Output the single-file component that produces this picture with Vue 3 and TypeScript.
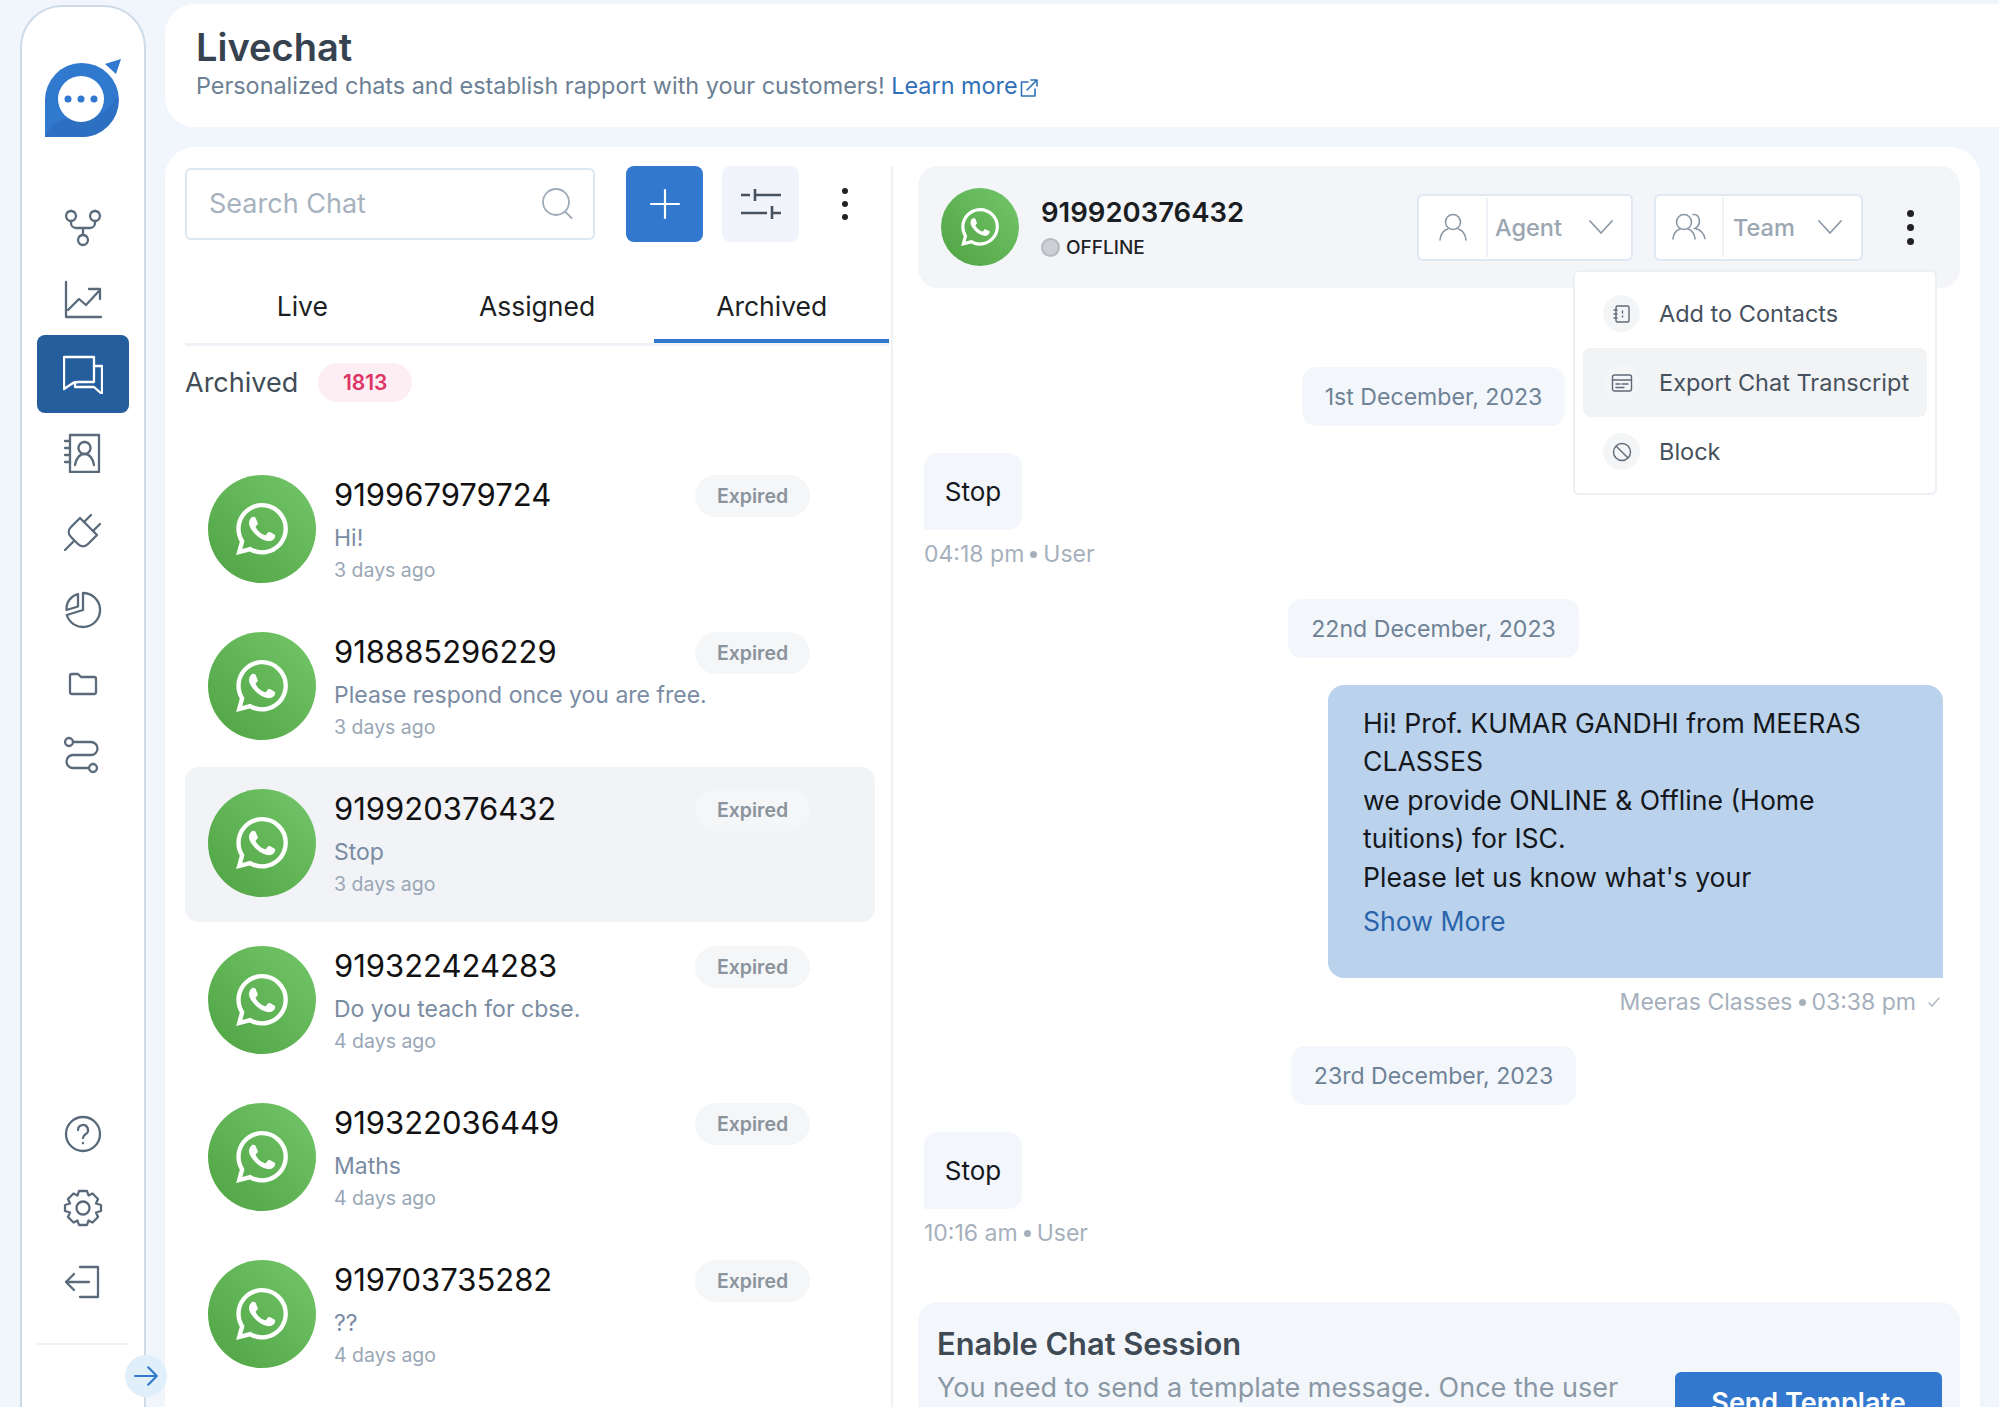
<script setup lang="ts">
const wa = "M17.472 14.382c-.297-.149-1.758-.867-2.03-.967-.273-.099-.471-.148-.67.15-.197.297-.767.966-.94 1.164-.173.199-.347.223-.644.075-.297-.15-1.255-.463-2.39-1.475-.883-.788-1.48-1.761-1.653-2.059-.173-.297-.018-.458.13-.606.134-.133.298-.347.446-.52.149-.174.198-.298.298-.497.099-.198.05-.371-.025-.52-.075-.149-.669-1.612-.916-2.207-.242-.579-.487-.5-.669-.51-.173-.008-.371-.01-.57-.01-.198 0-.52.074-.792.372-.272.297-1.04 1.016-1.04 2.479 0 1.462 1.065 2.875 1.213 3.074.149.198 2.096 3.2 5.077 4.487.709.306 1.262.489 1.694.625.712.227 1.36.195 1.871.118.571-.085 1.758-.719 2.006-1.413.248-.694.248-1.289.173-1.413-.074-.124-.272-.198-.57-.347m-5.421 7.403h-.004a9.87 9.87 0 01-5.031-1.378l-.361-.214-3.741.982.998-3.648-.235-.374a9.86 9.86 0 01-1.51-5.26c.001-5.45 4.436-9.884 9.888-9.884 2.64 0 5.122 1.03 6.988 2.898a9.825 9.825 0 012.893 6.994c-.003 5.45-4.437 9.884-9.885 9.884m8.413-18.297A11.815 11.815 0 0012.05 0C5.495 0 .16 5.335.157 11.892c0 2.096.547 4.142 1.588 5.945L.057 24l6.305-1.654a11.882 11.882 0 005.683 1.448h.005c6.554 0 11.89-5.335 11.893-11.893a11.821 11.821 0 00-3.48-8.413z";

const chats = [
  { phone: "919967979724", text: "Hi!", time: "3 days ago", active: false },
  { phone: "918885296229", text: "Please respond once you are free.", time: "3 days ago", active: false },
  { phone: "919920376432", text: "Stop", time: "3 days ago", active: true },
  { phone: "919322424283", text: "Do you teach for cbse.", time: "4 days ago", active: false },
  { phone: "919322036449", text: "Maths", time: "4 days ago", active: false },
  { phone: "919703735282", text: "??", time: "4 days ago", active: false },
];

const nav = [
  { h: 72, active: false, paths: ["M8 3a5 5 0 1 0 .01 0M32 3a5 5 0 1 0 .01 0M20 27a5 5 0 1 0 .01 0", "M8 13v2a5 5 0 0 0 5 5h14a5 5 0 0 0 5-5v-2M20 20v7"] },
  { h: 71, active: false, paths: ["M3 2v35h35", "M5 30l11-11 7 6 13-14", "M26 9h11v10"] },
  { h: 78, active: true, paths: ["M1 3h30v25H15l-5 1-9 6z", "M31 12h8v28l-8-7H12v-5"] },
  { h: 79, active: false, paths: ["M7 2h29v37H7z", "M2 8h5M2 15h5M2 22h5M2 29h5", "M21.500 9a6 6 0 1 0 .01 0", "M12 32c1-7 5-11 9.500-11s8.500 4 9.500 11"] },
  { h: 80, active: false, paths: ["M17 6L34 23L25 32C22 35 18 35 15 32L8 25C5 22 5 18 8 15Z", "M21 10l7-7M30 19l7-7", "M11 29l-9 9"] },
  { h: 76, active: false, paths: ["M20 3a17 17 0 1 1-16.200 22L20 20z", "M15 4v12.500L3.500 20C3 12 8 6 15 4z"] },
  { h: 72, active: false, paths: ["M7 12a2 2 0 0 1 2-2h6l3 3h13a2 2 0 0 1 2 2v13a2 2 0 0 1-2 2H9a2 2 0 0 1-2-2z"] },
  { h: 70, active: false, paths: ["M6 3a4 4 0 1 0 .01 0", "M10 7h18a6 6 0 0 1 0 13H10a6 6 0 0 0 0 13h16", "M30 29a4 4 0 1 0 .01 0"] },
];
</script>

<template>
  <div class="page">
    <aside class="sidebar">
      <svg class="logo" viewBox="0 0 78 80" width="78" height="80">
        <path d="M1 78V42a37 37 0 1 1 37 36z" fill="#3179ce" />
        <path d="M1 78c8-20 28-20 38-19 14 1 26-7 35-22 1 24-15 41-36 41z" fill="#2d70c2" />
        <path d="M61 5L77 0L72 15Z" fill="#3179ce" />
        <circle cx="37" cy="40" r="23" fill="#fff" />
        <circle cx="24" cy="40" r="3.500" fill="#3179ce" />
        <circle cx="37" cy="40" r="3.500" fill="#3179ce" />
        <circle cx="50" cy="40" r="3.500" fill="#3179ce" />
      </svg>
      <nav class="nav">
        <div v-for="(n, i) in nav" :key="i" class="nav-item" :class="{ active: n.active }" :style="{ height: n.h + 'px' }">
          <svg viewBox="0 0 40 40" width="40" height="40" fill="none" stroke="currentColor" stroke-width="2.300" stroke-linecap="round" stroke-linejoin="round">
            <path v-for="(p, j) in n.paths" :key="j" :d="p" />
          </svg>
        </div>
      </nav>
      <div class="nav-bottom">
        <div class="nav-item low">
          <svg viewBox="0 0 40 40" width="40" height="40" fill="none" stroke="currentColor" stroke-width="2.300" stroke-linecap="round" stroke-linejoin="round">
            <circle cx="20" cy="20" r="17" /><path d="M15 16a5 5 0 1 1 7.500 4.300c-1.600 1-2.500 2-2.500 3.700" /><path d="M20 29v.3" />
          </svg>
        </div>
        <div class="nav-item low">
          <svg viewBox="0 0 40 40" width="40" height="40" fill="none" stroke="currentColor" stroke-width="2.300" stroke-linecap="round" stroke-linejoin="round">
            <circle cx="20" cy="20" r="6.500" />
            <path d="M16 3h8l1.500 4.500 4-2 5.500 5.500-2 4.500 5 1.500v6l-5 1.500 2 4.500-5.500 5.500-4-2L24 37h-8l-1.500-4.500-4 2L5 29l2-4.500L2 23v-6l5-1.500L5 11l5.500-5.500 4 2z" />
          </svg>
        </div>
        <div class="nav-item low">
          <svg viewBox="0 0 40 40" width="40" height="40" fill="none" stroke="currentColor" stroke-width="2.300" stroke-linecap="round" stroke-linejoin="round">
            <path d="M17 5h18v30H17" /><path d="M26 20H3M11 12l-8 8 8 8" />
          </svg>
        </div>
      </div>
      <div class="side-rule"></div>
      <div class="expand">
        <svg viewBox="0 0 24 24" width="26" height="26" fill="none" stroke="#3179ce" stroke-width="2" stroke-linecap="round" stroke-linejoin="round"><path d="M2 12h20M14 4l8 8-8 8" /></svg>
      </div>
    </aside>

    <div class="content">
      <header class="topbar">
        <h1>Livechat</h1>
        <p>Personalized chats and establish rapport with your customers! <a>Learn more<svg viewBox="0 0 20 20" width="20" height="20" fill="none" stroke="currentColor" stroke-width="1.600" stroke-linecap="round" stroke-linejoin="round"><path d="M9 4H2.500v14h13.500v-7M8 12L18 2M12 2h6v6" /></svg></a></p>
      </header>

      <main class="card">
        <section class="left">
          <div class="tools">
            <div class="search">
              <span>Search Chat</span>
              <svg viewBox="0 0 34 34" width="34" height="34" fill="none" stroke="#9fabb8" stroke-width="1.800" stroke-linecap="round"><circle cx="15" cy="15" r="13" /><path d="M24.500 25l6 6" /></svg>
            </div>
            <button class="plus">
              <svg viewBox="0 0 32 32" width="32" height="32" fill="none" stroke="#fff" stroke-width="2.200" stroke-linecap="round"><path d="M16 2v28M2 16h28" /></svg>
            </button>
            <button class="filter">
              <svg viewBox="0 0 42 34" width="42" height="34" fill="none" stroke="#46525f" stroke-width="2.600"><path d="M1 8h9M15 8h26M15 2v12M1 26h26M32 26h9M32 19v13" /></svg>
            </button>
            <div class="kebab"><i></i><i></i><i></i></div>
          </div>
          <div class="tabs">
            <div class="tab">Live</div>
            <div class="tab">Assigned</div>
            <div class="tab on">Archived</div>
          </div>
          <div class="arch-row">
            <span>Archived</span>
            <b>1813</b>
          </div>
          <div class="list">
            <div v-for="c in chats" :key="c.phone" class="item" :class="{ selected: c.active }">
              <div class="avatar">
                <svg viewBox="0 0 24 24" width="52" height="52"><path :d="wa" fill="#fff" /></svg>
              </div>
              <div class="item-text">
                <div class="phone">{{ c.phone }}</div>
                <div class="preview">{{ c.text }}</div>
                <div class="ago">{{ c.time }}</div>
              </div>
              <span class="expired">Expired</span>
            </div>
          </div>
        </section>

        <section class="right">
          <div class="chat-head">
            <div class="avatar small">
              <svg viewBox="0 0 24 24" width="38" height="38"><path :d="wa" fill="#fff" /></svg>
            </div>
            <div class="who">
              <div class="who-phone">919920376432</div>
              <div class="who-state"><i></i>OFFLINE</div>
            </div>
            <div class="picker agent">
              <span class="pick-icon">
                <svg viewBox="0 0 30 30" width="30" height="30" fill="none" stroke="#8a97a6" stroke-width="1.600" stroke-linecap="round"><circle cx="15" cy="10" r="7.500" /><path d="M2 28c.5-7 5-10.500 8-11M28 28c-.5-7-5-10.500-8-11" /></svg>
              </span>
              <span class="pick-label">Agent</span>
              <svg viewBox="0 0 24 14" width="24" height="14" fill="none" stroke="#8a97a6" stroke-width="1.700" stroke-linecap="round" stroke-linejoin="round"><path d="M1 1l11 12L23 1" /></svg>
            </div>
            <div class="picker team">
              <span class="pick-icon">
                <svg viewBox="0 0 34 30" width="34" height="30" fill="none" stroke="#8a97a6" stroke-width="1.600" stroke-linecap="round"><circle cx="12" cy="10" r="7.500" /><path d="M1 27c.5-6 4-9 7-10M23 27c-.5-6-4-9-7-10M21 2.500c7-1 9 10 2 14 5 1 9 5 10 10" /></svg>
              </span>
              <span class="pick-label">Team</span>
              <svg viewBox="0 0 24 14" width="24" height="14" fill="none" stroke="#8a97a6" stroke-width="1.700" stroke-linecap="round" stroke-linejoin="round"><path d="M1 1l11 12L23 1" /></svg>
            </div>
            <div class="kebab head-kebab"><i></i><i></i><i></i></div>
          </div>

          <div class="menu">
            <div class="menu-item">
              <span class="menu-icon"><svg viewBox="0 0 20 20" width="20" height="20" fill="none" stroke="#5f6b78" stroke-width="1.400" stroke-linecap="round"><rect x="4" y="2" width="13" height="16" rx="1.500" /><path d="M2 6h3M2 10h3M2 14h3M10.500 7v2M10.500 12v1" /></svg></span>
              Add to Contacts
            </div>
            <div class="menu-item hover">
              <span class="menu-icon"><svg viewBox="0 0 22 20" width="22" height="20" fill="none" stroke="#5f6b78" stroke-width="1.400" stroke-linecap="round"><rect x="1.500" y="2" width="19" height="16" rx="2" /><path d="M1.500 7h19M5 11h4M11 11h6M5 14.500h8" /></svg></span>
              Export Chat Transcript
            </div>
            <div class="menu-item">
              <span class="menu-icon"><svg viewBox="0 0 20 20" width="20" height="20" fill="none" stroke="#5f6b78" stroke-width="1.400"><circle cx="10" cy="10" r="8.500" /><path d="M4 4l12 12" /></svg></span>
              Block
            </div>
          </div>

          <div class="thread">
            <div class="date d1">1st December, 2023</div>
            <div class="bubble">Stop</div>
            <div class="meta">04:18 pm<i></i>User</div>
            <div class="date d2">22nd December, 2023</div>
            <div class="outgoing">
              Hi! Prof. KUMAR GANDHI from MEERAS<br />CLASSES<br />we provide ONLINE &amp; Offline (Home<br />tuitions) for ISC.<br />Please let us know what's your
              <a>Show More</a>
            </div>
            <div class="meta end">Meeras Classes<i></i>03:38 pm
              <svg viewBox="0 0 14 12" width="14" height="12" fill="none" stroke="#a9b4bf" stroke-width="1.300" stroke-linecap="round" stroke-linejoin="round"><path d="M2 7l3 3 7-8" /></svg>
            </div>
            <div class="date d3">23rd December, 2023</div>
            <div class="bubble">Stop</div>
            <div class="meta">10:16 am<i></i>User</div>
          </div>

          <div class="enable">
            <div class="enable-text">
              <h2>Enable Chat Session</h2>
              <p>You need to send a template message. Once the user</p>
            </div>
            <button class="send">Send Template</button>
          </div>
        </section>
      </main>
    </div>
  </div>
</template>

<style>
html, body { margin: 0; background: #f1f6fd; }
</style>

<style scoped>
.page {
  display: flex;
  height: 1407px;
  overflow: hidden;
  background: #f1f6fd;
  font-family: Inter, "Liberation Sans", sans-serif;
  color: #111;
}
.sidebar {
  position: relative;
  flex: none;
  box-sizing: border-box;
  width: 126px;
  height: 1402px;
  margin: 5px 0 0 20px;
  border: 2px solid #cddbe8;
  border-bottom: none;
  border-radius: 42px 42px 0 0;
  background: #fff;
  display: flex;
  flex-direction: column;
  align-items: center;
}
.logo { margin-top: 52px; flex: none; }
.nav { margin-top: 53px; width: 92px; display: flex; flex-direction: column; }
.nav-item {
  display: flex;
  align-items: center;
  justify-content: center;
  color: #5a6a7a;
  border-radius: 8px;
}
.nav-item.active { background: #255e9c; color: #fff; }
.nav-bottom { margin-top: 307px; display: flex; flex-direction: column; }
.nav-item.low { height: 74px; width: 92px; }
.side-rule { margin-top: 24px; width: 92px; height: 2px; background: #eff3f8; }
.expand {
  position: absolute;
  left: 103px;
  top: 1348px;
  width: 42px;
  height: 42px;
  border-radius: 50%;
  background: #e1effb;
  display: flex;
  align-items: center;
  justify-content: center;
}
.content { flex: 1; min-width: 0; margin-left: 19px; display: flex; flex-direction: column; }
.topbar {
  flex: none;
  box-sizing: border-box;
  height: 123px;
  margin-top: 4px;
  padding: 22px 0 0 31px;
  background: #fff;
  border-radius: 30px 0 0 30px;
}
.topbar h1 { margin: 0; font-size: 38px; line-height: 42px; font-weight: 600; color: #36424f; }
.topbar p { margin: 1px 0 0; font-size: 23.400px; line-height: 34px; color: #6c7f94; white-space: nowrap; }
.topbar a { color: #2f70b9; }
.topbar a svg { vertical-align: -4px; margin-left: 1px; }
.card {
  flex: none;
  height: 1260px;
  display: flex;
  margin: 20px 19px 0 0;
  padding: 19px 0 0 20px;
  box-sizing: border-box;
  background: #fff;
  border-radius: 30px 30px 0 0;
}
.left {
  flex: none;
  box-sizing: border-box;
  width: 708px;
  padding-right: 2px;
  border-right: 2px solid #eef2f7;
}
.tools { display: flex; align-items: center; height: 75px; }
.search {
  box-sizing: border-box;
  width: 410px;
  height: 72px;
  padding: 0 18px 0 22px;
  border: 2px solid #dbe7f3;
  border-radius: 6px;
  display: flex;
  align-items: center;
  justify-content: space-between;
  font-size: 27px;
  color: #a6b2be;
}
.plus, .filter {
  width: 77px;
  height: 76px;
  border: none;
  padding: 0;
  border-radius: 8px;
  display: flex;
  align-items: center;
  justify-content: center;
}
.plus { margin-left: 31px; background: #3178ce; }
.filter { margin-left: 19px; background: #f1f5fb; }
.kebab { display: flex; flex-direction: column; gap: 7px; align-items: center; }
.kebab i { width: 6px; height: 6px; border-radius: 50%; background: #222; display: block; }
.tools .kebab { margin-left: 43px; }
.tabs { display: flex; margin-top: 33px; height: 69px; border-bottom: 3px solid #eff3f7; }
.tab {
  flex: 1;
  box-sizing: border-box;
  margin-bottom: -3px;
  height: 69px;
  display: flex;
  align-items: center;
  justify-content: center;
  padding-bottom: 2px;
  border-bottom: 4px solid transparent;
  font-size: 26.500px;
  color: #1c1f23;
}
.tab.on { border-bottom-color: #3178ce; }
.arch-row { display: flex; align-items: center; gap: 20px; margin-top: 17px; height: 39px; font-size: 27px; color: #414c57; }
.arch-row b {
  width: 94px;
  height: 39px;
  border-radius: 20px;
  background: #fdeef3;
  color: #dd3565;
  font-size: 21px;
  font-weight: 600;
  display: flex;
  align-items: center;
  justify-content: center;
}
.list { margin-top: 51px; width: 690px; display: flex; flex-direction: column; gap: 2px; }
.item {
  position: relative;
  box-sizing: border-box;
  height: 155px;
  padding: 22px 0 0 23px;
  display: flex;
  border-radius: 14px;
}
.item.selected { background: #f1f3f6; }
.avatar {
  flex: none;
  width: 108px;
  height: 108px;
  border-radius: 50%;
  background: linear-gradient(to top right, #4fa343, #73c76a);
  display: flex;
  align-items: center;
  justify-content: center;
}
.item-text { margin-left: 18px; padding-top: 3px; }
.phone { font-size: 31px; line-height: 34px; color: #111; }
.preview { margin-top: 9px; font-size: 23px; line-height: 34px; color: #7a8ca3; }
.ago { margin-top: 3px; font-size: 19.500px; line-height: 24px; color: #99a7b6; }
.expired {
  position: absolute;
  left: 510px;
  top: 22px;
  width: 115px;
  height: 42px;
  border-radius: 21px;
  background: #f4f6f8;
  color: #8b939c;
  font-size: 19.500px;
  font-weight: 600;
  display: flex;
  align-items: center;
  justify-content: center;
}
.right { position: relative; flex: none; margin-left: 25px; width: 1042px; }
.chat-head {
  box-sizing: border-box;
  height: 122px;
  padding: 0 0 0 23px;
  border-radius: 20px;
  background: #f3f5f9;
  display: flex;
  align-items: center;
}
.avatar.small { width: 78px; height: 78px; }
.who { margin-left: 22px; width: 376px; }
.who-phone { font-size: 27.500px; line-height: 34px; font-weight: 600; color: #1a1d21; }
.who-state { display: flex; align-items: center; gap: 6px; margin-top: 7px; font-size: 19px; line-height: 24px; font-weight: 500; color: #1f2327; }
.who-state i { width: 19px; height: 19px; box-sizing: border-box; border-radius: 50%; background: #ccd0d4; border: 2px solid #b5babf; }
.picker {
  box-sizing: border-box;
  height: 67px;
  background: #fff;
  border: 2px solid #dfe8f3;
  border-radius: 6px;
  display: flex;
  align-items: center;
  font-size: 23.500px;
  font-weight: 500;
  color: #9aa6b2;
}
.pick-icon {
  flex: none;
  height: 59px;
  display: flex;
  align-items: center;
  justify-content: center;
  border-right: 2px solid #eef2f7;
}
.agent { width: 216px; }
.agent .pick-icon { width: 67px; }
.agent .pick-label { margin-left: 7px; width: 94px; }
.team { width: 209px; margin-left: 21px; }
.team .pick-icon { width: 66px; }
.team .pick-label { margin-left: 9px; width: 85px; }
.head-kebab { margin-left: 44px; }
.head-kebab i { width: 7px; height: 7px; }
.menu {
  position: absolute;
  z-index: 2;
  left: 655px;
  top: 104px;
  box-sizing: border-box;
  width: 364px;
  height: 225px;
  padding: 7px 8px;
  background: #fff;
  border: 2px solid #eceff3;
  border-radius: 6px;
}
.menu-item {
  height: 69px;
  display: flex;
  align-items: center;
  gap: 19px;
  padding-left: 20px;
  border-radius: 8px;
  font-size: 23.500px;
  color: #46515d;
}
.menu-item.hover { background: #f2f3f5; }
.menu-icon {
  width: 37px;
  height: 37px;
  flex: none;
  border-radius: 50%;
  background: #f4f5f7;
  display: flex;
  align-items: center;
  justify-content: center;
}
.thread { padding: 0 17px 0 6px; display: flex; flex-direction: column; align-items: flex-start; }
.date {
  align-self: center;
  box-sizing: border-box;
  height: 59px;
  padding: 0 23px;
  border-radius: 14px;
  background: #f3f7fb;
  display: flex;
  align-items: center;
  font-size: 23.100px;
  color: #6f8296;
}
.d1 { margin-top: 79px; }
.d2 { margin-top: 31px; }
.d3 { margin-top: 29px; }
.bubble {
  box-sizing: border-box;
  margin-top: 27px;
  width: 98px;
  height: 77px;
  border-radius: 14px 14px 14px 0;
  background: #f3f7fb;
  display: flex;
  align-items: center;
  justify-content: center;
  font-size: 26px;
  color: #14181c;
}
.meta { margin-top: 9px; height: 30px; display: flex; align-items: center; font-size: 23px; color: #a5b0bc; }
.meta i { width: 7px; height: 7px; border-radius: 50%; background: #a5b0bc; margin: 0 6px; }
.meta.end { align-self: flex-end; }
.meta.end svg { margin-left: 11px; margin-right: 2px; }
.d2 { margin-top: 30px; }
.outgoing {
  box-sizing: border-box;
  align-self: flex-end;
  margin-top: 27px;
  width: 615px;
  height: 293px;
  padding: 19px 20px 0 35px;
  border-radius: 16px 16px 0 16px;
  background: #bbd2ec;
  font-size: 26.600px;
  line-height: 38.400px;
  color: #14181c;
}
.outgoing a { display: block; margin-top: 6px; color: #2a64ab; }
.enable {
  box-sizing: border-box;
  display: flex;
  justify-content: space-between;
  height: 140px;
  margin-top: 54px;
  padding: 0 18px 0 19px;
  border-radius: 20px 20px 0 0;
  background: #f3f7fc;
}
.enable h2 { margin: 24px 0 0; font-size: 30.800px; line-height: 36px; font-weight: 600; color: #3f4a55; }
.enable p { margin: 8px 0 0; font-size: 27px; line-height: 36px; color: #8a97a5; white-space: nowrap; }
.send {
  margin-top: 70px;
  width: 267px;
  height: 70px;
  border: none;
  border-radius: 6px 6px 0 0;
  background: #3178ce;
  color: #fff;
  font-family: inherit;
  font-size: 27px;
  font-weight: 600;
  padding: 0 0 10px;
  display: block;
}
</style>
